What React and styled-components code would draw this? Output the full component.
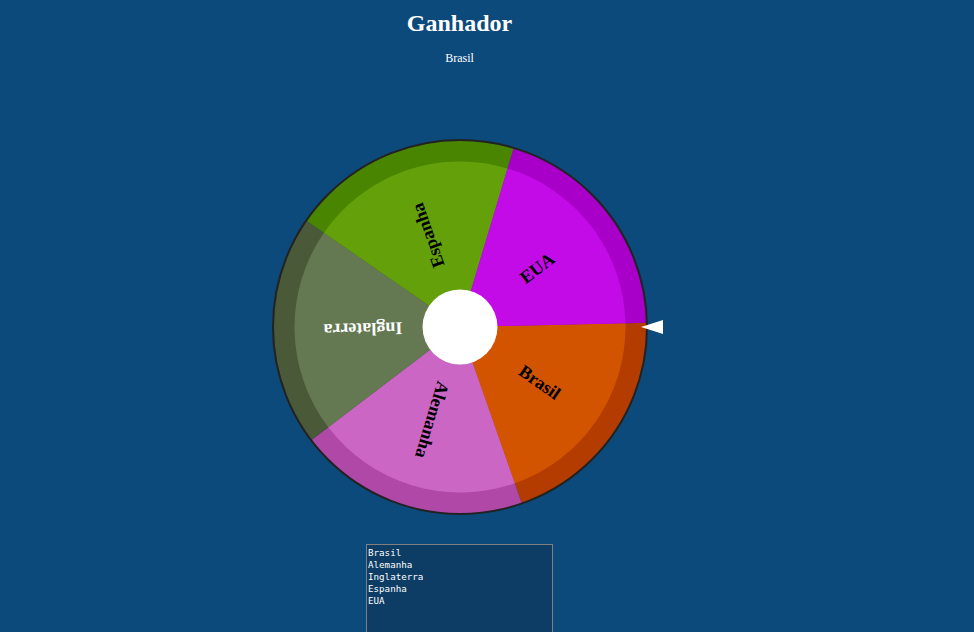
import React from "react";
import styled, { createGlobalStyle } from "styled-components";

const GlobalStyle = createGlobalStyle`
  body {
    margin: 0;
    background: #0c4a7b;
    font-family: "Liberation Serif", "Times New Roman", serif;
    color: white;
  }
`;

const Page = styled.div`
  width: 919px;
  display: flex;
  flex-direction: column;
  align-items: center;
`;

const Title = styled.h2`
  margin: 10px 0 0;
  font-size: 24px;
  font-weight: bold;
  line-height: 26px;
`;

const Winner = styled.p`
  margin: 15px 0 0;
  font-size: 12px;
  line-height: 14px;
`;

const WheelWrap = styled.div`
  position: relative;
  width: 400px;
  height: 400px;
  margin-top: 62px;
`;

const Pointer = styled.div`
  position: absolute;
  left: 381px;
  top: 193px;
  width: 0;
  height: 0;
  border-top: 7px solid transparent;
  border-bottom: 7px solid transparent;
  border-right: 22px solid white;
`;

const List = styled.textarea`
  margin-top: 17px;
  width: 183px;
  height: 100px;
  padding: 2px 1px;
  border: 1px solid #808080;
  background: #0d3c64;
  color: #ffffff;
  font-family: "DejaVu Sans Mono", "Liberation Mono", monospace;
  font-size: 9.2px;
  line-height: 12px;
  resize: none;
  outline: none;
`;

const items = [
  { name: "Brasil", inner: "#d35400", outer: "#b43c00", text: "#000" },
  { name: "Alemanha", inner: "#cc66c4", outer: "#b048a8", text: "#000" },
  { name: "Inglaterra", inner: "#647852", outer: "#4a5a38", text: "#fff" },
  { name: "Espanha", inner: "#64a00a", outer: "#4a8500", text: "#000" },
  { name: "EUA", inner: "#c20be6", outer: "#a800c8", text: "#000" },
];

const START = -1.3;
const CX = 200;
const CY = 200;

const point = (r, deg) => {
  const a = (deg * Math.PI) / 180;
  return [CX + r * Math.cos(a), CY + r * Math.sin(a)];
};

const slice = (r, from, to) => {
  const [x1, y1] = point(r, from);
  const [x2, y2] = point(r, to);
  return `M${CX} ${CY} L${x1} ${y1} A${r} ${r} 0 0 1 ${x2} ${y2} Z`;
};

const Wheel = () => {
  const step = 360 / items.length;
  return (
    <svg width="400" height="400" viewBox="0 0 400 400">
      {items.map((it, i) => {
        const from = START + i * step;
        return <path key={"o" + i} d={slice(187, from, from + step)} fill={it.outer} />;
      })}
      {items.map((it, i) => {
        const from = START + i * step;
        return <path key={"i" + i} d={slice(165.5, from, from + step)} fill={it.inner} />;
      })}
      <circle cx={CX} cy={CY} r="187" fill="none" stroke="#222" strokeWidth="2" />
      {items.map((it, i) => {
        const mid = START + i * step + step / 2;
        const [tx, ty] = point(97, mid);
        return (
          <text
            key={"t" + i}
            x={tx}
            y={ty}
            fill={it.text}
            fontSize="18"
            fontWeight="bold"
            fontFamily='"Liberation Serif", serif'
            textAnchor="middle"
            dominantBaseline="central"
            transform={`rotate(${mid} ${tx} ${ty})`}
          >
            {it.name}
          </text>
        );
      })}
      <circle cx={CX} cy={CY} r="37.5" fill="#fff" />
    </svg>
  );
};

export default function App() {
  return (
    <>
      <GlobalStyle />
      <Page>
        <Title>Ganhador</Title>
        <Winner>Brasil</Winner>
        <WheelWrap>
          <Wheel />
          <Pointer />
        </WheelWrap>
        <List readOnly value={items.map((it) => it.name).join("\n")} />
      </Page>
    </>
  );
}
